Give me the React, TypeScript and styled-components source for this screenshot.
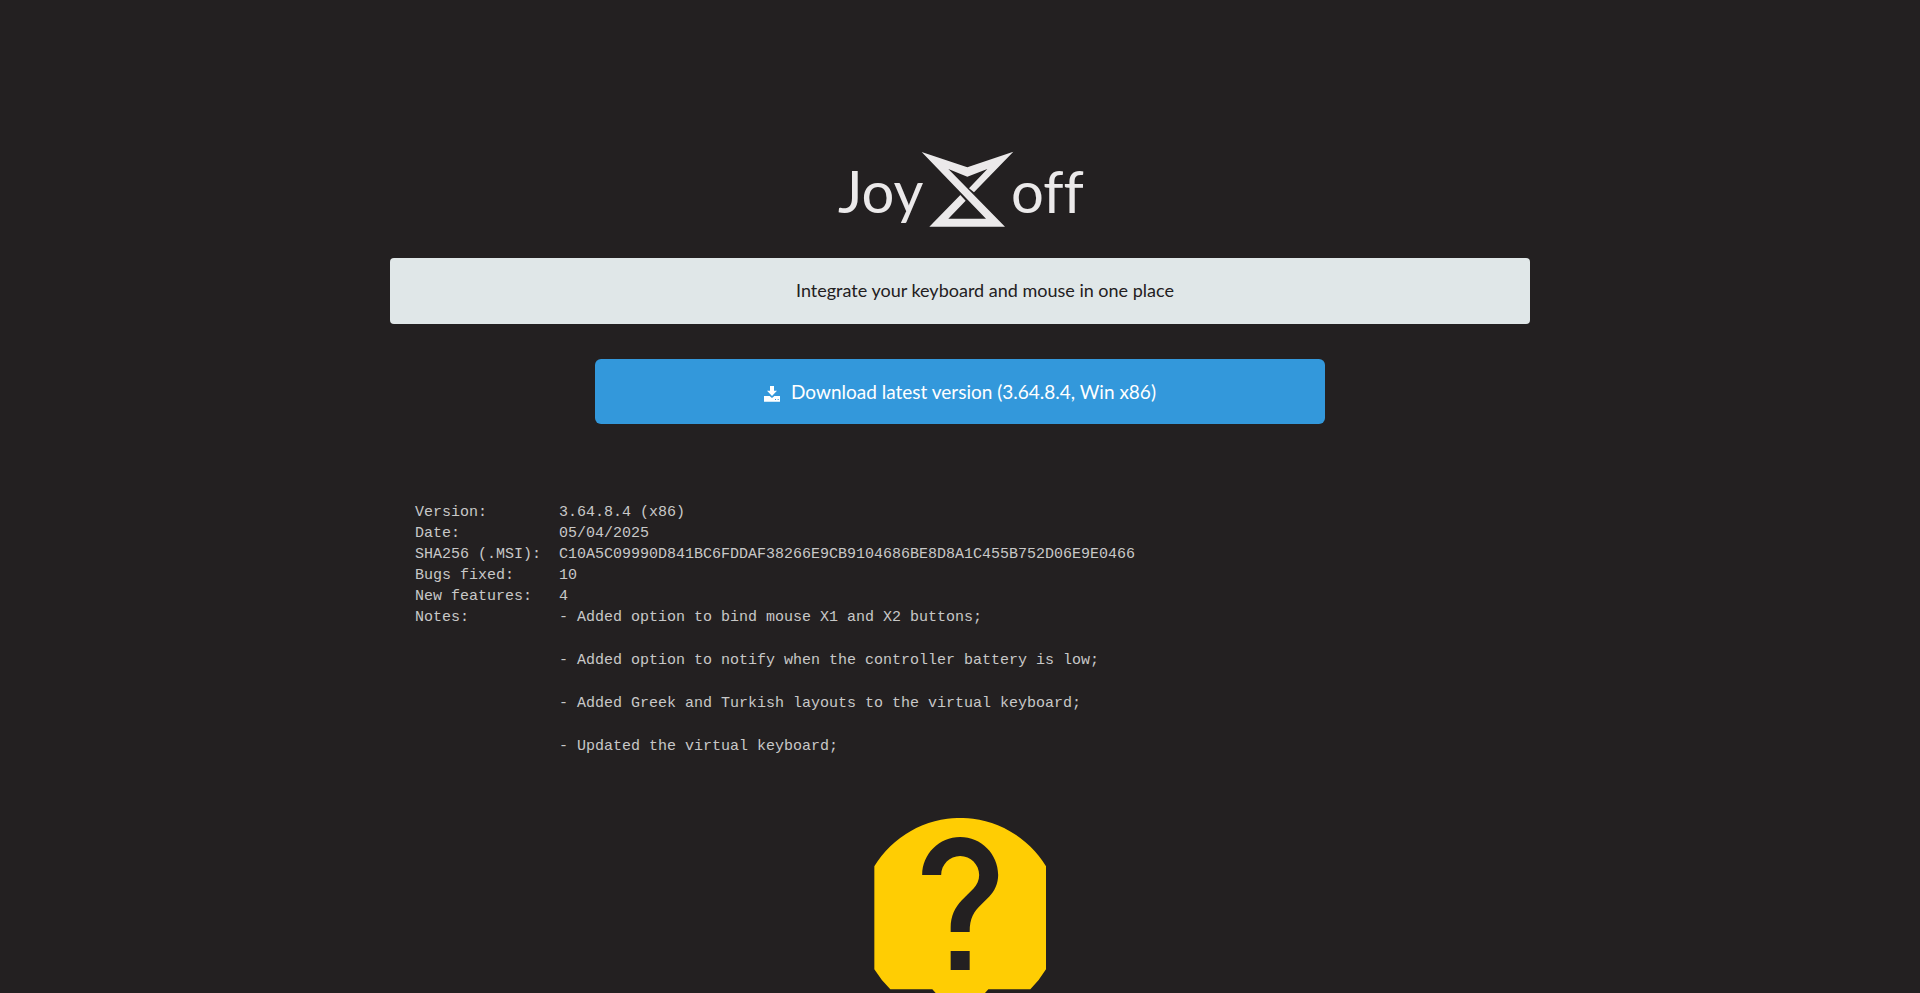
import React from 'react';
import styled, { createGlobalStyle } from 'styled-components';

const Global = createGlobalStyle`
  * { box-sizing: border-box; }
  body { margin: 0; background: #232021; color: #c8c8c8; font-family: Lato, sans-serif; }
`;

const Page = styled.main`
  max-width: 1140px;
  margin: 0 auto;
  padding-top: 140px;
  display: flex;
  flex-direction: column;
  align-items: center;
`;

const Logo = styled.svg`
  display: block;
  width: 280px;
  height: 100px;
  fill: #ebe9ea;
  font-family: Lato, sans-serif;
  font-size: 58px;
  font-variant-ligatures: none;
`;

const Tagline = styled.p`
  width: 100%;
  margin: 18px 0 35px;
  padding: 19px 0 21px 50px;
  border-radius: 4px;
  background: #e0e7e8;
  color: #232021;
  font-size: 18px;
  line-height: 26px;
  text-align: center;
`;

const DownloadLink = styled.a`
  display: flex;
  justify-content: center;
  align-items: center;
  gap: 11px;
  width: 64%;
  padding: 18px 27px;
  border-radius: 6px;
  background: #3398db;
  color: #fff;
  font-size: 19px;
  line-height: 29px;
  text-decoration: none;
`;

const DownloadIcon = styled.svg`
  width: 16px;
  height: 16px;
  margin-top: 4px;
  fill: currentColor;
`;

const Release = styled.dl`
  width: 100%;
  margin: 78px 0 61px;
  padding: 0 25px;
  display: grid;
  grid-template-columns: 144px 1fr;
  font: 15px/21px "Liberation Mono", monospace;
`;

const Term = styled.dt``;

const Detail = styled.dd`
  margin: 0;
`;

const Notes = styled.ul`
  margin: 0;
  padding: 0;
  list-style: none;
  display: flex;
  flex-direction: column;
  gap: 22px;
`;

const Mark = styled.svg`
  display: block;
  width: 172px;
  height: 175px;
`;

const facts = [
  ['Version:', '3.64.8.4 (x86)'],
  ['Date:', '05/04/2025'],
  ['SHA256 (.MSI):', 'C10A5C09990D841BC6FDDAF38266E9CB9104686BE8D8A1C455B752D06E9E0466'],
  ['Bugs fixed:', '10'],
  ['New features:', '4'],
];

const notes = [
  'Added option to bind mouse X1 and X2 buttons;',
  'Added option to notify when the controller battery is low;',
  'Added Greek and Turkish layouts to the virtual keyboard;',
  'Updated the virtual keyboard;',
];

export default function App() {
  return (
    <>
      <Global />
      <Page>
        <Logo viewBox="0 0 280 100" role="img" aria-label="JoyXoff">
          <text x="18" y="73">Joy</text>
          <path
            transform="scale(.33333)"
            d="M305 36L442 82L580 35L462 157L447 145L502 87L442 110L385 87L555 260H328L421 165L437 182L385 236H498Z"
          />
          <text x="191" y="73">off</text>
        </Logo>
        <Tagline>Integrate your keyboard and mouse in one place</Tagline>
        <DownloadLink href="#download">
          <DownloadIcon viewBox="0 0 48 48" aria-hidden="true">
            <path d="M18 0H30V14H39L24 30L9 14H18Z" />
            <path fillRule="evenodd" d="M0 30H17L24 36L31 30H48V47H0ZM33 39V42H36V39ZM41 39V42H44V39Z" />
          </DownloadIcon>
          Download latest version (3.64.8.4, Win x86)
        </DownloadLink>
        <Release>
          {facts.map(([term, value]) => (
            <React.Fragment key={term}>
              <Term>{term}</Term>
              <Detail>{value}</Detail>
            </React.Fragment>
          ))}
          <Term>Notes:</Term>
          <Detail>
            <Notes>
              {notes.map((note) => (
                <li key={note}>- {note}</li>
              ))}
            </Notes>
          </Detail>
        </Release>
        <Mark viewBox="72 54 516 525" role="img" aria-label="Help">
          <path
            fill="#ffcd03"
            d="M73 199A301 301 0 0 1 588 199V508A301 301 0 0 1 541 568H415L405 579H257L247 568H121A301 301 0 0 1 73 508Z"
          />
          <path
            fill="#232021"
            transform="translate(-11.5 -31.5) scale(28.5)"
            d="M15.07 11.25l-.9.92C13.45 12.9 13 13.5 13 15h-2v-.5c0-1.1.45-2.1 1.17-2.83l1.24-1.26c.37-.36.59-.86.59-1.41 0-1.1-.9-2-2-2s-2 .9-2 2H8c0-2.21 1.79-4 4-4s4 1.79 4 4c0 .88-.36 1.68-.93 2.25zM13 19h-2v-2h2z"
          />
        </Mark>
      </Page>
    </>
  );
}
